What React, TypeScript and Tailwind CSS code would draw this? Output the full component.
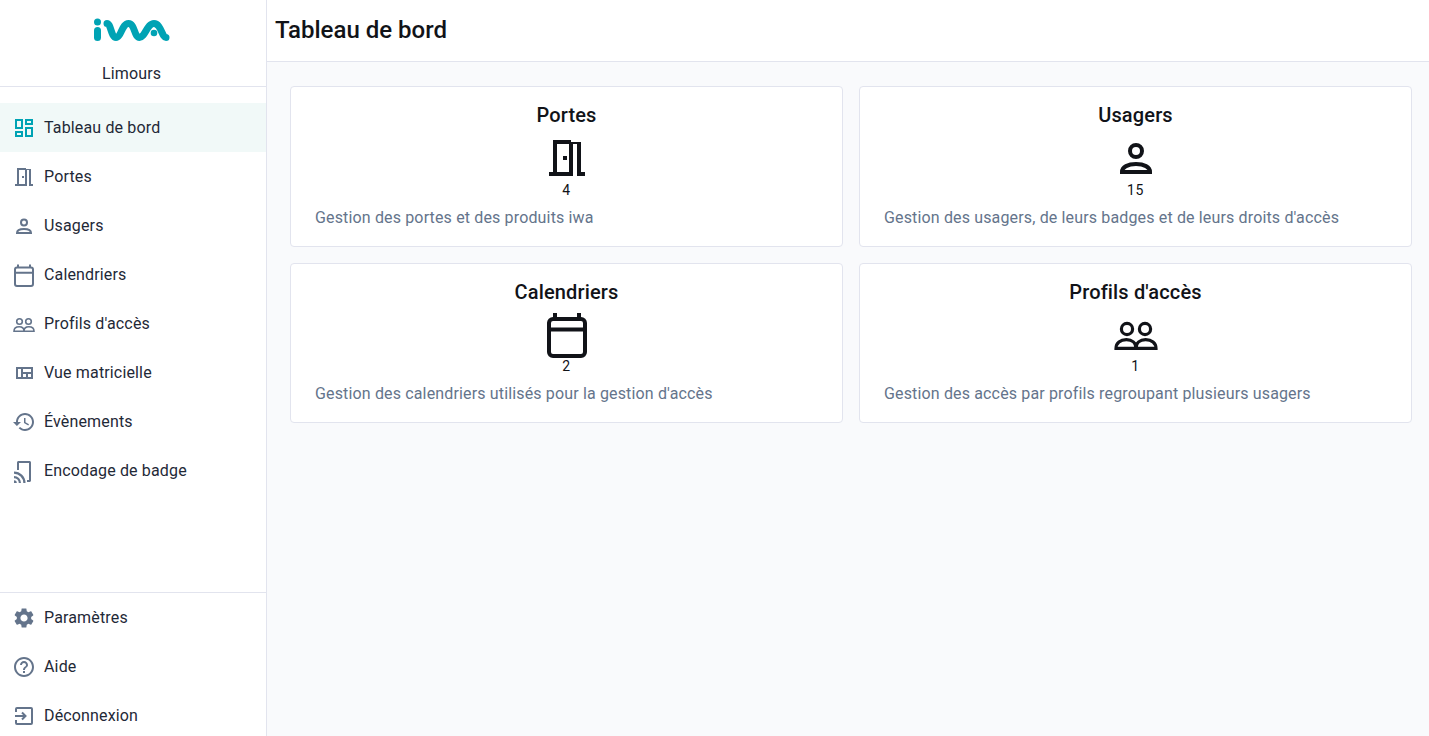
import type { ReactNode } from 'react'

const FONT = "font-['Roboto',sans-serif]"

function Icon({ size = 24, className = '', children }: { size?: number; className?: string; children: ReactNode }) {
  return (
    <svg width={size} height={size} viewBox="0 0 24 24" fill="currentColor" className={`shrink-0 ${className}`}>
      {children}
    </svg>
  )
}

const DashboardGlyph = () => (
  <path d="M19 5v2h-4V5h4M9 5v6H5V5h4m10 8v6h-4v-6h4M9 17v2H5v-2h4M21 3h-8v6h8V3zM11 3H3v10h8V3zm10 8h-8v10h8V11zm-10 4H3v6h8v-6z" />
)
const DoorGlyph = () => (
  <path d="M19 19V4h-5V3H5v16H3v2h12V5h2v16h4v-2h-2zm-6 0H7V5h6v14zm-3-8h2v2h-2z" />
)
const PersonGlyph = () => (
  <g fill="none" stroke="currentColor" strokeWidth="2">
    <circle cx="12" cy="8.5" r="3" />
    <path d="M5 19c0-2.5 3-4 7-4s7 1.5 7 4z" />
  </g>
)
const CalendarGlyph = () => (
  <g>
    <rect x="3" y="4.5" width="18" height="18.5" rx="2" fill="none" stroke="currentColor" strokeWidth="2" />
    <path d="M3 8.7h18v2H3zM5 1.5h2v3H5zM17 1.5h2v3h-2z" />
  </g>
)
const GroupGlyph = () => (
  <g fill="none" stroke="currentColor" strokeWidth="1.6">
    <circle cx="7.5" cy="9.5" r="2.8" />
    <circle cx="16.5" cy="9.5" r="2.8" />
    <path d="M2 19.2c0-2.7 2.2-4.4 5.2-4.4 2.8 0 4.8 1.7 4.8 4.4zM12 19.2c0-2.7 2-4.4 4.8-4.4 3 0 5.2 1.7 5.2 4.4z" />
  </g>
)
const MatrixGlyph = () => (
  <path
    fillRule="evenodd"
    d="M4 6h17v12H4zM6 8v8h3V8zM11 8v3h8V8zM11 13v3h3v-3zM16 13v3h3v-3z"
  />
)
const HistoryGlyph = () => (
  <path d="M13 3c-4.97 0-9 4.03-9 9H1l3.89 3.89.07.14L9 12H6c0-3.87 3.13-7 7-7s7 3.13 7 7-3.13 7-7 7c-1.93 0-3.68-.79-4.94-2.06l-1.42 1.42C8.27 19.99 10.51 21 13 21c4.97 0 9-4.03 9-9s-4.03-9-9-9zm-1 5v5l4.28 2.54.72-1.21-3.5-2.08V8H12z" />
)
const BadgeGlyph = () => (
  <g>
    <path d="M5 11V3.5C5 2.7 5.7 2 6.5 2h11c.8 0 1.5.7 1.5 1.5v18c0 .8-.7 1.5-1.5 1.5H15v-2h2V4H7v7z" />
    <path d="M2 21.2a2.8 2.8 0 0 1 2.8 2.8H2zM2 17a7 7 0 0 1 7 7H6.8A4.8 4.8 0 0 0 2 19.2zM2 12.5A11.5 11.5 0 0 1 13.5 24h-2.2A9.3 9.3 0 0 0 2 14.7z" />
  </g>
)
const SettingsGlyph = () => (
  <path d="M19.14 12.94c.04-.3.06-.61.06-.94 0-.32-.02-.64-.07-.94l2.03-1.58c.18-.14.23-.41.12-.61l-1.92-3.32c-.12-.22-.37-.29-.59-.22l-2.39.96c-.5-.38-1.03-.7-1.62-.94l-.36-2.54c-.04-.24-.24-.41-.48-.41h-3.84c-.24 0-.43.17-.47.41l-.36 2.54c-.59.24-1.13.57-1.62.94l-2.39-.96c-.22-.08-.47 0-.59.22L2.74 8.87c-.12.21-.08.47.12.61l2.03 1.58c-.05.3-.09.63-.09.94s.02.64.07.94l-2.03 1.58c-.18.14-.23.41-.12.61l1.92 3.32c.12.22.37.29.59.22l2.39-.96c.5.38 1.03.7 1.62.94l.36 2.54c.05.24.24.41.48.41h3.84c.24 0 .44-.17.47-.41l.36-2.54c.59-.24 1.13-.56 1.62-.94l2.39.96c.22.08.47 0 .59-.22l1.92-3.32c.12-.22.07-.47-.12-.61l-2.01-1.58zM12 15.6c-1.98 0-3.6-1.62-3.6-3.6s1.62-3.6 3.6-3.6 3.6 1.62 3.6 3.6-1.62 3.6-3.6 3.6z" />
)
const HelpGlyph = () => (
  <path d="M11 18h2v-2h-2v2zm1-16C6.48 2 2 6.48 2 12s4.48 10 10 10 10-4.48 10-10S17.52 2 12 2zm0 18c-4.41 0-8-3.59-8-8s3.59-8 8-8 8 3.59 8 8-3.59 8-8 8zm0-14c-2.21 0-4 1.79-4 4h2c0-1.1.9-2 2-2s2 .9 2 2c0 2-3 1.75-3 5h2c0-2.25 3-2.5 3-5 0-2.21-1.79-4-4-4z" />
)
const LogoutGlyph = () => (
  <g fill="none" stroke="currentColor" strokeWidth="2">
    <path d="M4 8V5a1 1 0 0 1 1-1h14a1 1 0 0 1 1 1v14a1 1 0 0 1-1 1H5a1 1 0 0 1-1-1v-3" />
    <path d="M3 12h10M10 8.5l3.5 3.5-3.5 3.5" />
  </g>
)

const NAV_ITEMS = [
  { label: 'Tableau de bord', icon: <DashboardGlyph />, active: true },
  { label: 'Portes', icon: <DoorGlyph /> },
  { label: 'Usagers', icon: <PersonGlyph /> },
  { label: 'Calendriers', icon: <CalendarGlyph /> },
  { label: "Profils d'accès", icon: <GroupGlyph /> },
  { label: 'Vue matricielle', icon: <MatrixGlyph /> },
  { label: 'Évènements', icon: <HistoryGlyph /> },
  { label: 'Encodage de badge', icon: <BadgeGlyph /> },
]

const FOOTER_ITEMS = [
  { label: 'Paramètres', icon: <SettingsGlyph /> },
  { label: 'Aide', icon: <HelpGlyph /> },
  { label: 'Déconnexion', icon: <LogoutGlyph /> },
]

const CARDS = [
  { title: 'Portes', count: '4', icon: <DoorGlyph />, text: 'Gestion des portes et des produits iwa', iconMargin: 'mt-[5px]' },
  { title: 'Usagers', count: '15', icon: <PersonGlyph />, text: "Gestion des usagers, de leurs badges et de leurs droits d'accès", iconMargin: 'mt-[5px]' },
  { title: 'Calendriers', count: '2', icon: <CalendarGlyph />, text: "Gestion des calendriers utilisés pour la gestion d'accès", iconMargin: 'mt-1' },
  { title: "Profils d'accès", count: '1', icon: <GroupGlyph />, text: 'Gestion des accès par profils regroupant plusieurs usagers', iconMargin: 'mt-1' },
]

function NavRow({ label, icon, active }: { label: string; icon: ReactNode; active?: boolean }) {
  return (
    <div className={`flex h-[49px] items-center gap-2 pl-3 ${active ? 'bg-[#f1f9f8]' : ''}`}>
      <Icon className={active ? 'text-[#00a3b4]' : 'text-[#64748b]'}>{icon}</Icon>
      <span className="text-base tracking-[0.00938em] text-[#1f2937]">{label}</span>
    </div>
  )
}

function Logo() {
  return (
    <svg width="78" height="26" viewBox="0 0 78 26" fill="none" className="text-[#00a3b4]">
      <circle cx="4.5" cy="5" r="3.5" fill="currentColor" />
      <g stroke="currentColor" strokeWidth="7" strokeLinecap="round" strokeLinejoin="round">
        <path d="M4.5 13.5v7" />
        <path d="M14 6.5c4 0 4 14 9 14s6-14 12.5-14 5.5 14 11 14 7.5-14 14.5-14 8 14 12 14" />
      </g>
      <circle cx="61" cy="16" r="3.3" fill="currentColor" />
    </svg>
  )
}

export default function App() {
  return (
    <div className={`flex h-[736px] w-full overflow-hidden bg-[#f9fafc] ${FONT}`}>
      <aside className="flex w-[267px] shrink-0 flex-col border-r border-[#e2e4ee] bg-white">
        <div className="flex h-[87px] shrink-0 flex-col items-center border-b border-[#e2e4ee] pr-[3px] pt-[17px]">
          <Logo />
          <span className="mt-[19px] text-base leading-6 tracking-[0.00938em] text-[#1f2937]">Limours</span>
        </div>
        <nav className="flex-1 pt-4">
          {NAV_ITEMS.map(item => (
            <NavRow key={item.label} {...item} />
          ))}
        </nav>
        <div className="-mb-1 border-t border-[#e2e4ee]">
          {FOOTER_ITEMS.map(item => (
            <NavRow key={item.label} {...item} />
          ))}
        </div>
      </aside>

      <div className="flex min-w-0 flex-1 flex-col">
        <header className="flex h-[62px] shrink-0 items-center border-b border-[#e2e4ee] bg-white pb-[2px] pl-2">
          <h1 className="text-2xl font-medium text-[#111318]">Tableau de bord</h1>
        </header>
        <main className="grid grid-cols-2 content-start gap-4 pl-[23px] pr-[17px] pt-6">
          {CARDS.map(card => (
            <section key={card.title} className="flex flex-col rounded border border-[#e2e4ee] bg-white px-6 pb-4 pt-[14px]">
              <h2 className="text-center text-xl font-medium leading-7 tracking-[0.0075em] text-[#111318]">{card.title}</h2>
              <Icon size={48} className={`mx-auto text-[#111318] ${card.iconMargin}`}>{card.icon}</Icon>
              <div className="text-center text-sm leading-4 tracking-[0.05em] text-[#111318]">{card.count}</div>
              <p className="mt-2 text-base leading-6 tracking-[0.00938em] text-[#64748b]">{card.text}</p>
            </section>
          ))}
        </main>
      </div>
    </div>
  )
}
